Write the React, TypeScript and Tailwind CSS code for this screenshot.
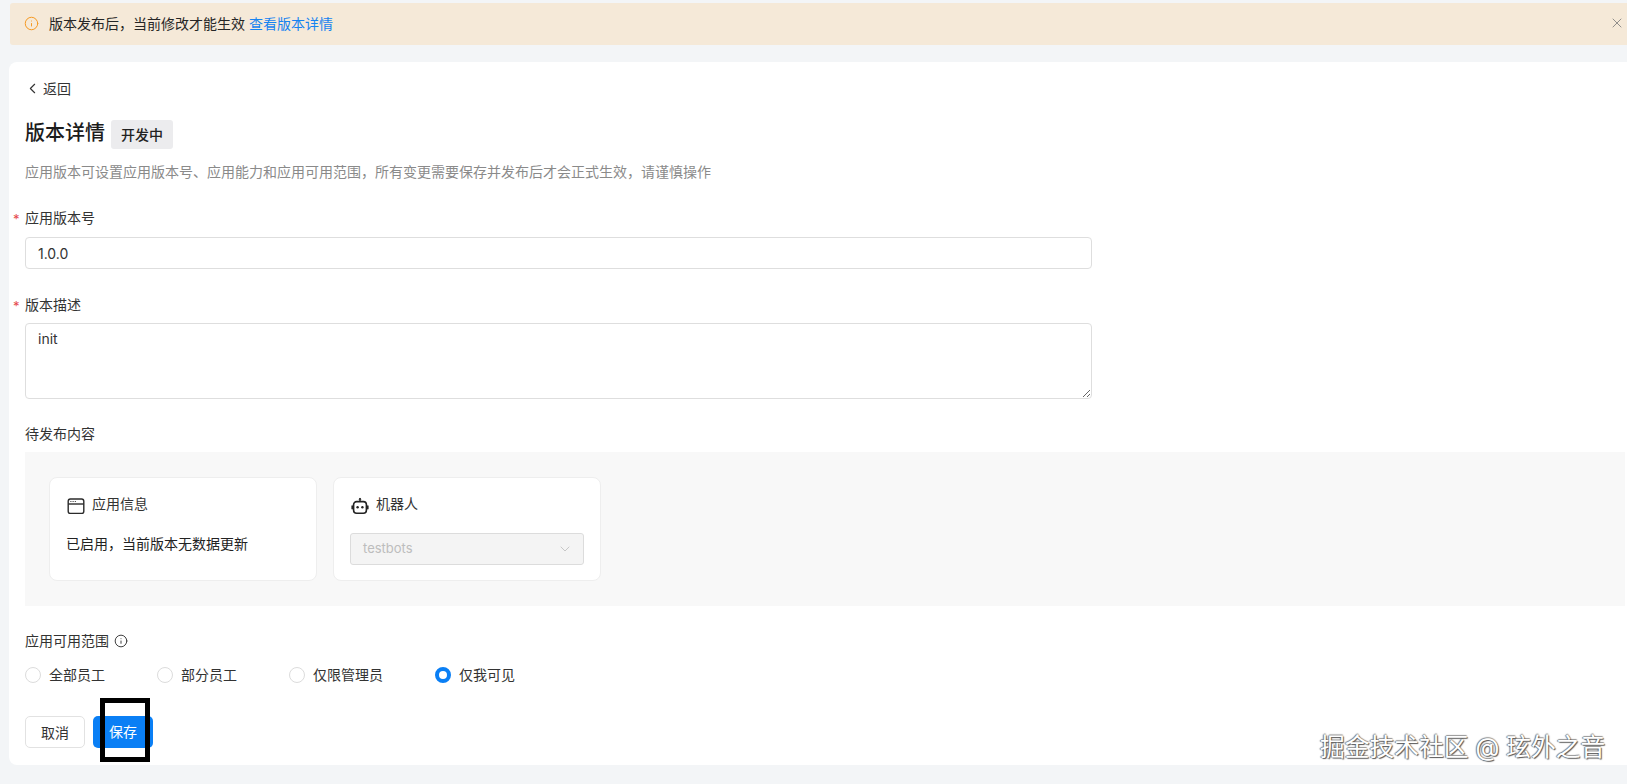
import { ChevronDown, ChevronLeft, Info, X } from "lucide-react";

const scopes = [
  { label: "全部员工", width: "w-[132px]", checked: false },
  { label: "部分员工", width: "w-[132px]", checked: false },
  { label: "仅限管理员", width: "w-[146px]", checked: false },
  { label: "仅我可见", width: "w-[100px]", checked: true },
];

function WindowIcon() {
  return (
    <svg className="ml-px translate-y-[2px]" width="18" height="18" viewBox="0 0 18 18" fill="none" stroke="#2b2b2b" strokeWidth="1.4">
      <rect x="1.2" y="2" width="15.6" height="14.4" rx="2.2" />
      <path d="M1.2 7h15.6" />
      <path d="M3.4 4.5h1M5.6 4.5h1M7.8 4.5h1" strokeWidth="1.1" />
    </svg>
  );
}

function RobotIcon() {
  return (
    <svg className="translate-y-[2px]" width="20" height="20" viewBox="0 0 20 20" fill="none">
      <path d="M10 2.2v3" stroke="#222" strokeWidth="1.5" />
      <path d="M8.4 3.6 10 1.8l1.6 1.8z" fill="#222" />
      <rect x="3.6" y="5.6" width="12.8" height="11.6" rx="3" stroke="#222" strokeWidth="1.6" />
      <rect x="1.4" y="9.2" width="1.6" height="4.4" rx="0.8" fill="#222" />
      <rect x="17" y="9.2" width="1.6" height="4.4" rx="0.8" fill="#222" />
      <circle cx="7.6" cy="11.2" r="1.2" fill="#222" />
      <circle cx="12.4" cy="11.2" r="1.2" fill="#222" />
    </svg>
  );
}

function Required({ children }: { children: string }) {
  return (
    <div className="relative h-[20px] translate-y-px leading-[20px] text-[#333]">
      <span className="absolute left-[-12px] top-[1px] text-[13px] text-[#e5484d]">*</span>
      {children}
    </div>
  );
}

export default function App() {
  return (
    <div
      className="h-[784px] w-[1627px] overflow-hidden bg-[#f3f5f7] pt-[3px] text-[14px] text-[#222]"
      style={{ fontFamily: 'Inter, "Noto Sans CJK SC", sans-serif' }}
    >
      {/* banner */}
      <div className="ml-[10px] flex h-[42px] items-center rounded-l-[3px] bg-[#f5e9d8] pb-[2px] pl-[14px] pr-[2px]">
        <Info size={15} strokeWidth={1.6} className="text-[#f59a23]" />
        <span className="ml-[10px] text-[#262626]">版本发布后，当前修改才能生效</span>
        <span className="ml-[4px] text-[#1683f0]">查看版本详情</span>
        <X size={16} strokeWidth={1.2} className="ml-auto text-[#777]" />
      </div>

      {/* main card */}
      <div className="ml-[9px] mt-[17px] h-[703px] rounded-l-[8px] bg-white pl-[16px]">
        <div className="flex h-[20px] translate-y-[16px] items-center text-[#333]">
          <ChevronLeft size={17} strokeWidth={1.6} className="ml-[-1px]" />
          <span className="ml-[2px]">返回</span>
        </div>

        <div className="mt-[38px] flex h-[29px] items-center pt-0">
          <h1 className="-translate-y-px text-[20px] font-medium leading-[29px] text-[#1c1c1c]">版本详情</h1>
          <span className="ml-[6px] flex h-[29px] w-[62px] items-center justify-center rounded-[3px] bg-[#ececee] text-[14px] font-medium text-[#222]">
            开发中
          </span>
        </div>
        <p className="mt-[13px] h-[20px] leading-[20px] text-[#8a8a8a]">
          应用版本可设置应用版本号、应用能力和应用可用范围，所有变更需要保存并发布后才会正式生效，请谨慎操作
        </p>

        <div className="mt-[25px]">
          <Required>应用版本号</Required>
          <div className="mt-[10px] flex h-[32px] w-[1067px] items-center rounded-[4px] border border-[#dedede] px-[12px] text-[#333]">
            1.0.0
          </div>
        </div>

        <div className="mt-[25px]">
          <Required>版本描述</Required>
          <textarea
            readOnly
            defaultValue="init"
            className="mt-[9px] block h-[76px] w-[1067px] rounded-[4px] border border-[#dedede] px-[12px] py-[5px] leading-[20px] text-[#333] outline-none"
          />
        </div>

        <div className="mt-[25px] h-[20px] leading-[20px] text-[#333]">待发布内容</div>

        <div className="mr-[2px] mt-[8px] flex h-[154px] gap-[16px] bg-[#f8f8f8] pl-[24px] pt-[25px]">
          <div className="h-[104px] w-[268px] rounded-[8px] border border-[#eeeeee] bg-white px-[16px] pt-[15px]">
            <div className="flex h-[22px] items-center gap-[7px] text-[#333]">
              <WindowIcon />
              <span className="-translate-y-px">应用信息</span>
            </div>
            <div className="mt-[19px] h-[20px] leading-[20px] text-[#222]">已启用，当前版本无数据更新</div>
          </div>
          <div className="h-[104px] w-[268px] rounded-[8px] border border-[#eeeeee] bg-white px-[16px] pt-[15px]">
            <div className="flex h-[22px] items-center gap-[6px] text-[#333]">
              <RobotIcon />
              <span className="-translate-y-px">机器人</span>
            </div>
            <div className="mt-[18px] flex h-[32px] w-[234px] items-center justify-between rounded-[3px] border border-[#dcdcdc] bg-[#f4f4f4] px-[12px] text-[13px] text-[#bdbdbd]">
              testbots
              <ChevronDown size={16} strokeWidth={1.2} className="mr-[-2px] text-[#bbb]" />
            </div>
          </div>
        </div>

        <div className="mt-[25px] flex h-[20px] items-center gap-[5px] text-[#333]">
          <span className="-translate-y-px">应用可用范围</span>
          <Info size={14} strokeWidth={1.6} className="text-[#333]" />
        </div>

        <div className="mt-[14px] flex h-[20px] items-center">
          {scopes.map((scope) => (
            <label key={scope.label} className={`flex items-center gap-[8px] text-[#333] ${scope.width}`}>
              {scope.checked ? (
                <span className="h-[16px] w-[16px] rounded-full border-[4.5px] border-[#0a7ff5] bg-white" />
              ) : (
                <span className="h-[16px] w-[16px] rounded-full border-[1.5px] border-[#dcdcdc] bg-white" />
              )}
              <span className="-translate-y-px">{scope.label}</span>
            </label>
          ))}
        </div>

        <div className="mt-[31px] flex gap-[8px]">
          <button className="h-[32px] w-[60px] rounded-[5px] border border-[#e2e2e2] bg-white text-[#333]">取消</button>
          <button className="h-[32px] w-[60px] rounded-[5px] bg-[#0a7ff5] pb-[2px] text-white">保存</button>
        </div>
      </div>

      {/* hand-drawn mark and watermark sitting on the screenshot */}
      <div className="absolute left-[100px] top-[698px] h-[64px] w-[50px] border-[5px] border-black" />
      <div
        className="absolute left-[1320px] top-[730px] text-[24.75px] leading-[34px] text-white"
        style={{ textShadow: "1px 1px 1px #555, -1px 0 1px #777, 0 -1px 1px #999" }}
      >
        掘金技术社区 @ 玹外之音
      </div>
    </div>
  );
}
